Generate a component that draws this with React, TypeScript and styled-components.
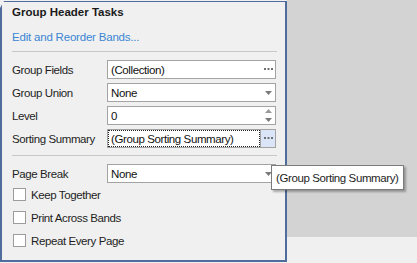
import styled, { createGlobalStyle } from "styled-components";

const GlobalStyle = createGlobalStyle`
  html, body {
    margin: 0;
    padding: 0;
    background: #f0f0f0;
  }
  body {
    font-family: "Liberation Sans", Arial, sans-serif;
    font-size: 11.5px;
    color: #1e1e1e;
  }
`;

const Screen = styled.div`
  position: relative;
  display: flex;
  width: 417px;
  height: 263px;
  overflow: hidden;
`;

const Panel = styled.div`
  box-sizing: border-box;
  width: 287px;
  height: 261px;
  margin-top: 1px;
  padding: 2px 9px 0 10px;
  background: #f0f0f0;
  border: 1px solid #4f6c9c;
  border-width: 1px 2px 2px 2px;
  clip-path: polygon(4px 0, 100% 0, 100% 100%, 0 100%, 0 7px);
  display: flex;
  flex-direction: column;
`;

const Canvas = styled.div`
  flex: 1;
  display: flex;
  flex-direction: column;
`;

const Designer = styled.div`
  height: 237px;
  background: #d3d3d3;
`;

const Title = styled.div`
  font-weight: bold;
  font-size: 11.5px;
  color: #1a1a1a;
  height: 16px;
  line-height: 16px;
`;

const Link = styled.div`
  margin-top: 9px;
  color: #3a86d4;
  letter-spacing: -0.2px;
  height: 16px;
  line-height: 16px;
`;

const Separator = styled.div<{ $top: number }>`
  width: 265px;
  height: 1px;
  background: #c8c8c8;
  margin-top: ${(p) => p.$top}px;
`;

const Rows = styled.div<{ $top: number }>`
  display: flex;
  flex-direction: column;
  gap: 4px;
  margin-top: ${(p) => p.$top}px;
`;

const Row = styled.div`
  display: grid;
  grid-template-columns: 95px 169px;
  align-items: center;
  height: 19px;
`;

const Label = styled.span`
  letter-spacing: -0.4px;
`;

const Editor = styled.div`
  box-sizing: border-box;
  height: 19px;
  display: flex;
  align-items: stretch;
  background: #fff;
  border: 1px solid #a3a3a3;
`;

const Value = styled.div<{ $focused?: boolean }>`
  flex: 1;
  display: flex;
  align-items: center;
  padding-left: 2px;
  letter-spacing: -0.4px;
  color: #111;
  border: 1px dotted ${(p) => (p.$focused ? "#222" : "transparent")};
`;

const Side = styled.div<{ $active?: boolean }>`
  width: 14px;
  display: flex;
  align-items: center;
  justify-content: center;
  background: ${(p) => (p.$active ? "#dae6f8" : "transparent")};
  border-left: 1px solid ${(p) => (p.$active ? "#a3a3a3" : "transparent")};
`;

const Checks = styled.div`
  display: flex;
  flex-direction: column;
  gap: 10px;
  margin-top: 5px;
  padding-left: 1px;
`;

const CheckRow = styled.label`
  display: flex;
  align-items: center;
  gap: 5px;
  height: 13px;
  letter-spacing: -0.4px;
`;

const Box = styled.span`
  box-sizing: border-box;
  width: 13px;
  height: 13px;
  background: #fff;
  border: 1px solid #9c9c9c;
`;

const Tooltip = styled.div`
  position: absolute;
  left: 271px;
  top: 165px;
  box-sizing: border-box;
  width: 133px;
  height: 25px;
  padding-left: 4px;
  display: flex;
  align-items: center;
  white-space: nowrap;
  background: #fff;
  border: 1px solid #7a7a7a;
  box-shadow: 2px 2px 2px rgba(0, 0, 0, 0.3);
  color: #1e1e1e;
  letter-spacing: -0.4px;
`;

function Dots() {
  return (
    <svg width="9" height="3" viewBox="0 0 9 3">
      <rect x="0" y="0" width="2" height="2" fill="#707070" />
      <rect x="3.5" y="0" width="2" height="2" fill="#707070" />
      <rect x="7" y="0" width="2" height="2" fill="#707070" />
    </svg>
  );
}

function Arrow() {
  return (
    <svg width="7" height="4" viewBox="0 0 7 4">
      <path d="M0 0H7L3.5 4Z" fill="#7a7a7a" />
    </svg>
  );
}

function Spin() {
  return (
    <svg width="7" height="13" viewBox="0 0 7 13">
      <path d="M0 4H7L3.5 0Z" fill="#9a9a9a" />
      <path d="M0 9H7L3.5 13Z" fill="#7a7a7a" />
    </svg>
  );
}

interface FieldProps {
  label: string;
  value: string;
  kind: "dots" | "arrow" | "spin";
  focused?: boolean;
}

function Field({ label, value, kind, focused }: FieldProps) {
  return (
    <Row>
      <Label>{label}</Label>
      <Editor>
        <Value $focused={focused}>{value}</Value>
        <Side $active={focused}>
          {kind === "dots" && <Dots />}
          {kind === "arrow" && <Arrow />}
          {kind === "spin" && <Spin />}
        </Side>
      </Editor>
    </Row>
  );
}

export default function App() {
  return (
    <>
      <GlobalStyle />
      <Screen>
        <Panel>
          <Title>Group Header Tasks</Title>
          <Link>Edit and Reorder Bands...</Link>
          <Separator $top={6} />
          <Rows $top={8}>
            <Field label="Group Fields" value="(Collection)" kind="dots" />
            <Field label="Group Union" value="None" kind="arrow" />
            <Field label="Level" value="0" kind="spin" />
            <Field
              label="Sorting Summary"
              value="(Group Sorting Summary)"
              kind="dots"
              focused
            />
          </Rows>
          <Separator $top={7} />
          <Rows $top={8}>
            <Field label="Page Break" value="None" kind="arrow" />
          </Rows>
          <Checks>
            <CheckRow>
              <Box />
              Keep Together
            </CheckRow>
            <CheckRow>
              <Box />
              Print Across Bands
            </CheckRow>
            <CheckRow>
              <Box />
              Repeat Every Page
            </CheckRow>
          </Checks>
        </Panel>
        <Canvas>
          <Designer />
        </Canvas>
        <Tooltip>(Group Sorting Summary)</Tooltip>
      </Screen>
    </>
  );
}
